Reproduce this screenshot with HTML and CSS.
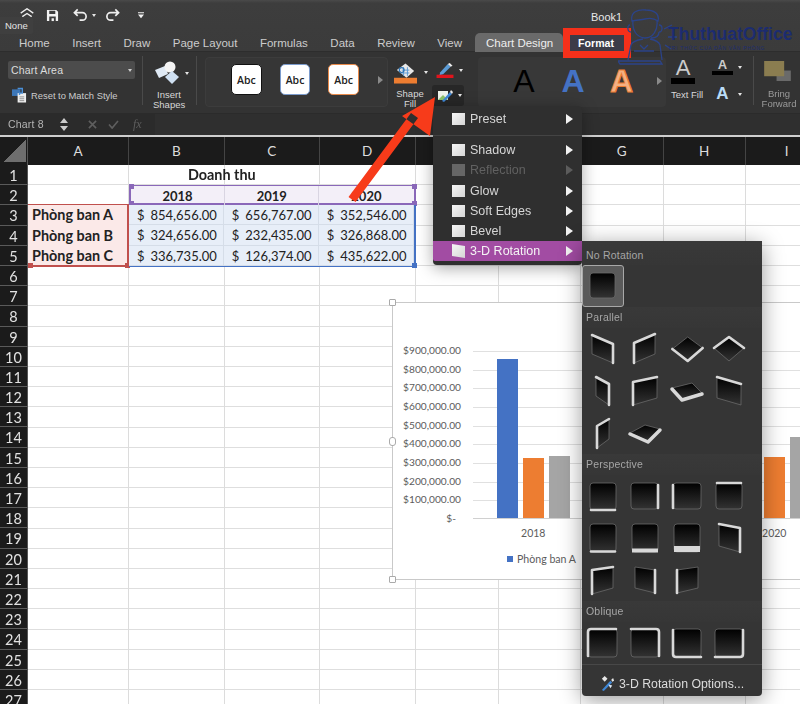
FILE: index.html
```html
<!DOCTYPE html>
<html lang="vi">
<head>
<meta charset="utf-8">
<title>Book1</title>
<link rel="stylesheet" href="styles.css">
</head>
<body>
<svg class="defs" aria-hidden="true"><defs><linearGradient id="fg" x1="0" y1="0" x2="0" y2="1"><stop offset="0" stop-color="#000"/><stop offset="1" stop-color="#333"/></linearGradient></defs></svg>
<div class="app">
  <header class="titlebar">
    <div class="quick">
      <svg class="q-home" viewBox="0 0 20 14"><path d="M2 6.500 10 1l8 5.500M4 11l6-4 6 4" /></svg>
      <svg class="q-save" viewBox="0 0 14 14"><path class="solid" d="M1 1h10l2 2v10H1zM3.500 1.800v3.700h6.500V1.800zM3.500 8v5h7V8z"/><rect class="solid" x="6" y="10" width="2.500" height="3"/></svg>
      <svg class="q-undo" viewBox="0 0 16 14"><path d="M5 1 1.500 4.500 5 8M2 4.500h8a4 4 0 0 1 0 8H7"/></svg>
      <span class="caret small"></span>
      <svg class="q-redo" viewBox="0 0 16 14"><path d="M11 1l3.500 3.500L11 8M14 4.500H6a4 4 0 0 0 0 8h3"/></svg>
      <svg class="q-more" viewBox="0 0 8 9"><path class="solid" d="M0 0h8v1.500H0zM0 3h8L4 8z"/></svg>
    </div>
    <div class="doc-title">Book1</div>
    <nav class="tabs">
      <span class="tab">Home</span><span class="tab">Insert</span><span class="tab">Draw</span><span class="tab">Page Layout</span><span class="tab">Formulas</span><span class="tab">Data</span><span class="tab">Review</span><span class="tab">View</span>
      <span class="tab tab-design">Chart Design</span>
      <span class="tab tab-format"><i class="red-box"></i><b>Format</b></span>
    </nav>
  </header>

  <section class="ribbon">
    <div class="g-selection">
      <div class="combo"><span>Chart Area</span><i class="combo-arrows"></i></div>
      <div class="reset">
        <svg viewBox="0 0 16 16"><rect x="0" y="2" width="9" height="7" fill="#3d77b8"/><rect x="6" y="6" width="9" height="10" fill="#eee"/><path d="M6 1h5v5H8v2" fill="none" stroke="#4a90d9" stroke-width="1.500"/><path d="M8 10h5M8 12h5M8 14h5" stroke="#777" stroke-width=".8"/></svg>
        <span>Reset to Match Style</span>
      </div>
    </div>
    <i class="sep"></i>
    <div class="g-insert">
      <div class="ico-row">
        <svg class="shapes" viewBox="0 0 26 24"><path d="M1 9l10-4 3 8-9 4z" fill="#dfe9f4"/><circle cx="16" cy="6" r="5.500" fill="#f4f4f4"/><path d="M18 10l7 6-7 7-7-7z" fill="#cfe0f2"/></svg>
        <span class="caret"></span>
      </div>
      <div class="lbl">Insert<br>Shapes</div>
    </div>
    <i class="sep"></i>
    <div class="g-styles">
      <button class="abc abc-dark">Abc</button><button class="abc abc-blue">Abc</button><button class="abc abc-orange">Abc</button>
      <i class="more-arrow"></i>
    </div>
    <div class="g-fill">
      <div class="fill-col">
        <div class="ico-row">
          <svg class="bucket" viewBox="0 0 24 23"><path d="M3 9l9-7 9 8-8 7z" fill="#e8e8e8"/><path d="M8 9h8M7 12h9M10 6v9M14 6v9" stroke="#5b9bd5" stroke-width="1"/><circle cx="8" cy="9" r="2.500" fill="none" stroke="#2e75b6" stroke-width="1.300"/><rect y="17" width="24" height="6" fill="#ed7d31"/></svg>
          <span class="caret"></span>
        </div>
        <div class="lbl">Shape<br>Fill</div>
      </div>
      <div class="pen-col">
        <div class="ico-row pen-row">
          <svg class="pen" viewBox="0 0 18 17"><path d="M4 11 12 2l3 3-8 8-4 1z" fill="#5b9bd5"/><path d="M12 2l2-1 3 3-2 1z" fill="#eee"/><rect y="13.500" width="18" height="3.500" fill="#e0141c"/></svg>
          <span class="caret"></span>
        </div>
        <div class="ico-row effects">
          <svg class="fx-ico" viewBox="0 0 16 14"><path d="M1 2h10v9H1z" fill="#eef3ea"/><path d="M1 11 6 6l5 5z" fill="#8cc46a"/><path d="M5 12 13 3l2 2-8 8z" fill="#3f87d6"/><path d="M13 3l1-2 2 2-1 2z" fill="#e8e8e8"/></svg>
          <span class="caret"></span>
        </div>
      </div>
    </div>
    <div class="g-wordart">
      <span class="wa wa-black">A</span><span class="wa wa-blue">A</span><span class="wa wa-orange">A</span>
      <i class="more-arrow"></i>
    </div>
    <div class="g-text">
      <div class="textfill">
        <span class="tf-a">A</span><i class="tf-bar"></i>
        <span class="tf-lbl">Text Fill</span>
      </div>
      <div class="text-opts">
        <div class="ico-row"><div class="small-a"><span>A</span><i></i></div><span class="caret"></span></div>
        <div class="ico-row"><span class="blue-a">A</span><span class="caret"></span></div>
      </div>
    </div>
    <i class="sep"></i>
    <div class="g-bring">
      <svg viewBox="0 0 28 21"><rect x="13" y="10" width="15" height="11" fill="#6a6a6a"/><rect width="21" height="16" fill="#8b7d50"/></svg>
      <div class="lbl">Bring<br>Forward</div>
    </div>
  </section>

  <section class="formula">
    <span class="name">Chart 8</span>
    <svg class="spin" viewBox="0 0 8 13"><path d="M4 0l4 5H0zM4 13 0 8h8z"/></svg>
    <svg class="f-x" viewBox="0 0 10 10"><path d="M1 1l8 8M9 1l-8 8"/></svg>
    <svg class="f-check" viewBox="0 0 12 10"><path d="M1 5l3.500 4L11 1"/></svg>
    <i class="f-fx">fx</i>
    <div class="f-input"></div>
  </section>
  <div class="sheet-line"></div>

  <main class="sheet">
    <div class="corner"><i></i></div>
    <div class="col-heads">
      <span class="ca">A</span><span class="cb">B</span><span class="cb">C</span><span class="cb">D</span><span class="ce">E</span><span class="cf">F</span><span class="cf">G</span><span class="cf">H</span><span class="cf">I</span>
    </div>
    <div class="row-heads">
      <span>1</span><span>2</span><span>3</span><span>4</span><span>5</span><span>6</span><span>7</span><span>8</span><span>9</span><span>10</span><span>11</span><span>12</span><span>13</span><span>14</span><span>15</span><span>16</span><span>17</span><span>18</span><span>19</span><span>20</span><span>21</span><span>22</span><span>23</span><span>24</span><span>25</span><span>26</span><span>27</span>
    </div>
    <div class="cells">
      <div class="data">
        <div class="title">Doanh thu</div>
        <div class="range range-purple">
          <span>2018</span><span>2019</span><span>2020</span>
          <i class="h tl"></i><i class="h tr"></i><i class="h bl"></i><i class="h br"></i>
        </div>
        <div class="range-red">
          <span>Phòng ban A</span><span>Phòng ban B</span><span>Phòng ban C</span>
          <i class="h bl"></i><i class="h br"></i>
        </div>
        <div class="range range-blue">
          <p><span>$</span><span>854,656.00</span></p><p><span>$</span><span>656,767.00</span></p><p><span>$</span><span>352,546.00</span></p>
          <p><span>$</span><span>324,656.00</span></p><p><span>$</span><span>232,435.00</span></p><p><span>$</span><span>326,868.00</span></p>
          <p><span>$</span><span>336,735.00</span></p><p><span>$</span><span>126,374.00</span></p><p><span>$</span><span>435,622.00</span></p>
          <i class="h br"></i>
        </div>
      </div>

      <figure class="chart">
        <i class="hd hd-t"></i><i class="hd hd-m"></i><i class="hd hd-b"></i>
        <div class="plot-wrap">
          <div class="axis"><span>$900,000.00</span><span>$800,000.00</span><span>$700,000.00</span><span>$600,000.00</span><span>$500,000.00</span><span>$400,000.00</span><span>$300,000.00</span><span>$200,000.00</span><span>$100,000.00</span><span class="zero">$-</span></div>
          <div class="plot-col">
            <div class="plot">
              <div class="grp"><i class="bar b1" style="height:94.96%"></i><i class="bar b2" style="height:36.07%"></i><i class="bar b3" style="height:37.41%"></i></div>
              <div class="grp"><i class="bar b1" style="height:72.97%"></i><i class="bar b2" style="height:25.83%"></i><i class="bar b3" style="height:14.04%"></i></div>
              <div class="grp"><i class="bar b1" style="height:39.17%"></i><i class="bar b2" style="height:36.32%"></i><i class="bar b3" style="height:48.40%"></i></div>
            </div>
            <div class="cats"><span>2018</span><span>2019</span><span>2020</span></div>
            <div class="legend"><i></i>Phòng ban A</div>
          </div>
        </div>
      </figure>
    </div>
  </main>
</div>

<div class="watermark">
  <svg class="wm-person" viewBox="0 0 64 58"><path d="M14 14c-2-9 6-12 14-11 7 0 14 3 12 11-4-3-9-3-13-2-4 1-9 1-13 2zM15 14c-1 9 3 16 12 17 8 0 13-8 12-17M12 18c-3 0-3 7 1 7M41 18c4 0 4 7 0 7M41 25c0 4-3 6-8 6M10 53l3-15c1-3 6-5 12-6M44 53l-2-15c-1-3-5-5-10-6M0 54h42l2 3H2zM16 44h20M22 38l4 4 4-4M46 22l8-4M50 30h9M47 38l6 4"/></svg>
  <div class="wm-text"><strong>ThuthuatOffice</strong><small>TRI THỨC CỦA DÂN VĂN PHÒNG</small></div>
</div>

<div class="tooltip">None</div>

<div class="menu">
  <div class="mi"><i class="chk"></i><span>Preset</span><i class="tri"></i></div>
  <hr>
  <div class="mi"><i class="chk"></i><span>Shadow</span><i class="tri"></i></div>
  <div class="mi off"><i class="chk"></i><span>Reflection</span><i class="tri"></i></div>
  <div class="mi"><i class="chk"></i><span>Glow</span><i class="tri"></i></div>
  <div class="mi"><i class="chk"></i><span>Soft Edges</span><i class="tri"></i></div>
  <div class="mi"><i class="chk"></i><span>Bevel</span><i class="tri"></i></div>
  <div class="mi active"><i class="chk skew"></i><span>3-D Rotation</span><i class="tri"></i></div>
</div>

<div class="sub">
  <h4 class="h-first">No Rotation</h4>
  <div class="tiles">
    <div class="tile sel"><svg viewBox="0 0 42 42"><rect class="f" x="8" y="8" width="25" height="25" rx="3"/></svg></div>
  </div>
  <h4>Parallel</h4>
  <div class="tiles">
    <div class="tile"><svg viewBox="0 0 42 42"><path class="f" d="M10 7 31 16V35L10 26Z"/><path class="e" d="M10 7 31 16V35"/></svg></div>
    <div class="tile"><svg viewBox="0 0 42 42"><path class="f" d="M10 15 31 6V26L10 35Z"/><path class="e" d="M10 35V15L31 6"/></svg></div>
    <div class="tile"><svg viewBox="0 0 42 42"><path class="f" d="M21.700 9 36.700 20 21.700 33 6.300 21Z"/><path class="e" d="M6.300 21 21.700 33 36.700 20"/></svg></div>
    <div class="tile"><svg viewBox="0 0 42 42"><path class="f" d="M21 9 36 20 21 33 6 20Z"/><path class="e" d="M6 20 21 9 36 20"/></svg></div>
    <div class="tile"><svg viewBox="0 0 42 42"><path class="f" d="M14 7 27 14V35L14 26Z"/><path class="e" d="M14 7 27 14V35"/></svg></div>
    <div class="tile"><svg viewBox="0 0 42 42"><path class="f" d="M9 12 33 7V28L9 35Z"/><path class="e" d="M9 35V12L33 7"/></svg></div>
    <div class="tile"><svg viewBox="0 0 42 42"><path class="f" d="M6 18 26 13 36 23 16 29Z"/><path class="e w3" d="M6 19 16 30 36 24"/></svg></div>
    <div class="tile"><svg viewBox="0 0 42 42"><path class="f" d="M9 7 33 14V35L9 28Z"/><path class="e" d="M9 7 33 14"/></svg></div>
    <div class="tile"><svg viewBox="0 0 42 42"><path class="f" d="M15 14 27 7V27L15 36Z"/><path class="e" d="M15 36V14L27 7"/></svg></div>
    <div class="tile"><svg viewBox="0 0 42 42"><path class="f" d="M6 21 21 13 36 17 24 29Z"/><path class="e w3" d="M6 22 24 30 36 18"/></svg></div>
  </div>
  <h4>Perspective</h4>
  <div class="tiles">
    <div class="tile"><svg viewBox="0 0 42 42"><rect class="f" x="8" y="8" width="26" height="27" rx="3"/><path class="e" d="M9 35H33"/></svg></div>
    <div class="tile"><svg viewBox="0 0 42 42"><rect class="f" x="7" y="8" width="27" height="26" rx="3"/><path class="e" d="M34 10V33"/></svg></div>
    <div class="tile"><svg viewBox="0 0 42 42"><rect class="f" x="7" y="8" width="28" height="26" rx="3"/><path class="e" d="M7 10V33"/></svg></div>
    <div class="tile"><svg viewBox="0 0 42 42"><rect class="f" x="8" y="8" width="26" height="26" rx="3"/><path class="e" d="M9 8H33"/></svg></div>
    <div class="tile"><svg viewBox="0 0 42 42"><rect class="f" x="8" y="7" width="26" height="28" rx="3"/><path class="e" d="M9 34.500H33"/></svg></div>
    <div class="tile"><svg viewBox="0 0 42 42"><rect class="f" x="8" y="7" width="26" height="28" rx="3"/><path class="e w4" d="M8 33.500H34"/></svg></div>
    <div class="tile"><svg viewBox="0 0 42 42"><rect class="f" x="8" y="7" width="26" height="28" rx="3"/><path class="e w6" d="M8 32H34"/></svg></div>
    <div class="tile"><svg viewBox="0 0 42 42"><path class="f" d="M11 7 32 11V35L11 29Z"/><path class="e" d="M11 7 32 11V35"/></svg></div>
    <div class="tile"><svg viewBox="0 0 42 42"><path class="f" d="M10 11 31 8V29L10 35Z"/><path class="e" d="M10 35V11L31 8"/></svg></div>
    <div class="tile"><svg viewBox="0 0 42 42"><path class="f" d="M11 8 31 11V34L11 29Z"/><path class="e" d="M31 11V34"/></svg></div>
    <div class="tile"><svg viewBox="0 0 42 42"><path class="f" d="M11 11 32 8V29L11 34Z"/><path class="e" d="M11 34V11"/></svg></div>
  </div>
  <h4>Oblique</h4>
  <div class="tiles">
    <div class="tile"><svg viewBox="0 0 42 42"><rect class="f" x="6" y="7" width="29" height="28" rx="3"/><path class="e" d="M6 34V10Q6 7 9 7H34"/></svg></div>
    <div class="tile"><svg viewBox="0 0 42 42"><rect class="f" x="7" y="7" width="28" height="28" rx="3"/><path class="e" d="M7 7H32Q35 7 35 10V34"/></svg></div>
    <div class="tile"><svg viewBox="0 0 42 42"><rect class="f" x="7" y="7" width="28" height="28" rx="3"/><path class="e" d="M7 8V32Q7 35 10 35H35"/></svg></div>
    <div class="tile"><svg viewBox="0 0 42 42"><rect class="f" x="7" y="7" width="28" height="28" rx="3"/><path class="e" d="M7 35H32Q35 35 35 32V8"/></svg></div>
  </div>
  <div class="options">
    <svg viewBox="0 0 16 16"><path d="M2 3l3-3 3 3-3 3z" fill="#e8e8e8"/><path d="M2 15l9-10 2 2-9 9z" fill="#3f87d6"/><path d="M12 4l2-2 1 3-2 1z" fill="#e8e8e8"/><path d="M9 9l4 1-2 3z" fill="#dfe9f4"/></svg>
    <span>3-D Rotation Options...</span>
  </div>
</div>

<svg class="arrow" viewBox="0 0 800 704"><path d="M348.500 197 411 113l7 5-62.500 84ZM435 97 402 116 430 136Z"/></svg>
</body>
</html>
```

FILE: styles.css
```css
* { box-sizing: border-box; }
html, body { margin: 0; padding: 0; }
body { width: 800px; height: 704px; overflow: hidden; position: relative; background: #fff; font-family: "Liberation Sans", Arial, sans-serif; color: #ddd; filter: blur(.4px); }
.defs { position: absolute; width: 0; height: 0; }
.app { display: flex; flex-direction: column; height: 704px; }
svg { display: block; }

/* title bar */
.titlebar { height: 52px; flex: none; position: relative; z-index: 2; background: linear-gradient(#4a4a4a 0, #3d3d3d 3px, #3b3b3b 100%); border-bottom: 1px solid #2d2d2d; }
.quick { display: flex; align-items: center; height: 30px; padding-left: 19px; }
.quick svg path { fill: none; stroke: #eee; stroke-width: 1.800; }
.quick svg path.solid, .quick svg rect.solid { fill: #f2f2f2; fill-rule: evenodd; stroke: none; }
.q-home { width: 16px; height: 11px; margin-top: -4px; }
.q-save { width: 13px; height: 13px; margin-left: 11px; }
.q-undo { width: 15px; height: 14px; margin-left: 14px; }
.q-redo { width: 15px; height: 14px; margin-left: 9px; }
.q-more { width: 6px; height: 7px; margin-left: 18px; }
.caret { width: 0; height: 0; border: 2.500px solid transparent; border-top: 3px solid #e6e6e6; border-bottom: 0; display: block; flex: none; }
.caret.small { margin-left: 4px; }
.doc-title { position: absolute; left: 591px; top: 11px; font-size: 11px; color: #e8e8e8; }
.tabs { display: flex; align-items: stretch; position: absolute; left: 19px; top: 33px; height: 19px; gap: 22.500px; font-size: 11.500px; color: #ccc; }
.tab { display: flex; align-items: center; height: 19px; white-space: nowrap; }
.tab-design { background: #6a6a6a; color: #eee; border-radius: 5px 5px 0 0; padding: 0 11px; width: 88px; margin-left: -9.500px; }
.tab-format { position: relative; margin-left: -7.500px; color: #fff; font-size: 10.600px; }
.tab-format b { position: relative; }
.red-box { position: absolute; left: -15px; top: -5px; width: 68px; height: 30px; border: 7px solid #f5301a; background: #3c3c48; }

/* ribbon */
.ribbon { height: 61px; flex: none; display: flex; background: #333; }
.sep { width: 1px; background: #4a4a4a; margin: 4px 0 8px; flex: none; }
.lbl { font-size: 9.500px; line-height: 10px; text-align: center; color: #d8d8d8; }
.ico-row { display: flex; align-items: center; gap: 5px; }
.g-selection { width: 142px; flex: none; padding: 9px 0 0 8px; }
.combo { width: 127px; height: 18px; background: #4c4c4c; border-radius: 2px; display: flex; align-items: center; justify-content: space-between; padding: 0 3px; font-size: 10.500px; color: #ddd; letter-spacing: .2px; }
.combo-arrows { width: 0; height: 0; border: 2px solid transparent; border-top: 3px solid #ccc; border-bottom: 0; }
.reset { display: flex; align-items: center; gap: 4px; margin-top: 8px; padding-left: 4px; font-size: 9.400px; color: #ccc; white-space: nowrap; }
.reset svg { width: 15px; height: 16px; flex: none; }
.g-insert { width: 53px; flex: none; padding: 9px 0 0 11px; }
.shapes { width: 26px; height: 24px; }
.g-insert .lbl { width: 32px; margin-top: 5px; margin-left: -1px; }
.g-styles { width: 183px; margin: 5px 0 6px 8px; flex: none; display: flex; align-items: center; gap: 18px; padding: 0 4px 5px 25px; border: 1px solid #3c3c3c; border-radius: 4px; background: #363636; }
.abc { width: 31px; height: 31px; padding: 0; border-radius: 5px; background: #fff; color: #222; font: 600 10.500px "Open Sans", sans-serif; border: 1px solid #111; }
.abc-blue { border-color: #7b9bcc; }
.abc-orange { border-color: #e98a4a; }
.more-arrow { width: 0; height: 0; border: 4px solid transparent; border-left: 5px solid #8a8a8a; border-right: 0; margin-left: 1px; }
.g-fill { width: 90px; flex: none; display: flex; padding-left: 6px; gap: 4px; }
.fill-col { padding-top: 9px; width: 34px; }
.bucket { width: 24px; height: 23px; }
.fill-col .lbl { margin-top: 5px; width: 32px; }
.fill-col .caret { margin-left: 2px; }
.pen-col { width: 34px; padding-top: 10px; }
.pen { width: 18px; height: 16px; }
.pen-row { padding-left: 4px; }
.effects { width: 32px; height: 21px; margin-top: 7px; background: #272727; border-radius: 3px; padding-left: 5px; }
.fx-ico { width: 16px; height: 14px; }
.g-wordart { width: 188px; flex: none; display: flex; align-items: center; margin: 5px 0 6px; padding: 0 0 2px 35px; gap: 26.500px; background: #383838; border-radius: 4px; }
.wa { font-size: 32px; font-weight: 700; width: 22px; text-align: center; line-height: 1; }
.wa-black { color: #000; font-weight: 400; }
.wa-blue { color: #4472c4; }
.wa-orange { color: #f4b183; -webkit-text-stroke: 1px #ed7d31; }
.g-wordart .more-arrow { margin-left: -2px; }
.g-text { width: 87px; flex: none; display: flex; }
.textfill { width: 46px; padding: 6px 0 0 5px; display: flex; flex-direction: column; align-items: flex-start; }
.tf-a { font-size: 22px; line-height: 20px; width: 24px; text-align: center; color: #ccc; font-weight: 400; }
.tf-bar { width: 24px; height: 6px; background: #000; }
.tf-lbl { font-size: 9.500px; margin-top: 5px; color: #d8d8d8; white-space: nowrap; }
.text-opts { padding-top: 7px; display: flex; flex-direction: column; gap: 11px; }
.small-a { width: 21px; text-align: center; font-size: 13px; line-height: 12px; color: #ccc; font-weight: 700; }
.small-a i { display: block; height: 4px; background: #000; }
.blue-a { width: 21px; text-align: center; font-size: 17px; font-weight: 700; line-height: 16px; color: #b9dcf7; }
.g-bring { flex: 1; padding: 9px 0 0 10px; }
.g-bring svg { width: 27px; height: 20px; }
.g-bring .lbl { color: #9a9a9a; margin: 8px 0 0 -5px; width: 40px; }

/* formula bar */
.formula { height: 22px; flex: none; display: flex; align-items: center; background: #2b2b2b; padding-left: 8px; }
.name { width: 52px; font-size: 10.500px; color: #b5b5b5; letter-spacing: .2px; line-height: 24px; }
.spin { width: 8px; height: 13px; fill: #ccc; margin-left: 0; }
.f-x { width: 9px; height: 9px; margin-left: 20px; }
.f-check { width: 11px; height: 9px; margin-left: 11px; }
.f-x path, .f-check path { fill: none; stroke: #5e5e5e; stroke-width: 1.800; }
.f-fx { margin-left: 14px; font: italic 12px "Liberation Serif", serif; color: #5e5e5e; width: 14px; }
.f-input { flex: 1; height: 21px; margin-left: 8px; background: #2f2f2f; }
.sheet-line { height: 2px; flex: none; background: #cfcfcf; }

/* sheet */
.sheet { flex: 1; min-height: 0; display: grid; grid-template-columns: 28px 1fr; grid-template-rows: 28px 539px; overflow: hidden; background: #fff; }
.corner { background: #1b1b1b; padding: 2px 0 0 3px; border-right: 1px solid #555; }
.corner i { display: block; width: 23px; height: 23px; background: linear-gradient(135deg, transparent 50%, #6e6e6e 50%); }
.col-heads { display: flex; background: #1b1b1b; color: #ddd; font: 400 13.500px/30px Lato, sans-serif; }
.col-heads span { display: flex; align-items: center; justify-content: center; border-right: 1px solid #444; flex: none; }
.ca { width: 101px; } .cb { width: 95.500px; } .ce { width: 83px; } .cf { width: 82.500px; }
.row-heads { display: flex; flex-direction: column; background: #1b1b1b; font: 400 14.500px Lato, sans-serif; color: #e2e2e2; border-right: 1px solid #555; overflow: hidden; }
.row-heads span { flex: 0 0 20.200px; height: 20.200px; min-height: 0; line-height: 21px; text-align: center; border-bottom: 1px solid #5a5a5a; }
.cells { position: relative; overflow: hidden; font: 400 13px Lato, sans-serif; color: #222;
  background:
    linear-gradient(#dcdcdc,#dcdcdc) 100px 0/1px 100% no-repeat,
    linear-gradient(#dcdcdc,#dcdcdc) 196px 0/1px 100% no-repeat,
    linear-gradient(#dcdcdc,#dcdcdc) 291px 0/1px 100% no-repeat,
    linear-gradient(#dcdcdc,#dcdcdc) 387px 0/1px 100% no-repeat,
    linear-gradient(#dcdcdc,#dcdcdc) 470px 0/1px 100% no-repeat,
    linear-gradient(#dcdcdc,#dcdcdc) 552px 0/1px 100% no-repeat,
    linear-gradient(#dcdcdc,#dcdcdc) 635px 0/1px 100% no-repeat,
    linear-gradient(#dcdcdc,#dcdcdc) 717px 0/1px 100% no-repeat,
    repeating-linear-gradient(#fff 0 19.200px, #dedede 19.200px 20.200px);
}
.data { display: grid; grid-template-columns: 101px 286.500px; grid-template-rows: 20.200px 20.200px 61.600px; }
.title { grid-column: 1 / 3; text-align: center; font-weight: 700; font-size: 14.400px; line-height: 20px; }
.range { display: grid; grid-template-columns: repeat(3, 1fr); position: relative; }
.range-purple { grid-column: 2; grid-row: 2; background: #f3eff8; border: 2px solid #8a68b9; border-width: 1px 2px 2px; font-weight: 700; }
.range-purple span { text-align: center; line-height: 20px; border-right: 1px solid #d9d5e2; }
.range-purple span:last-of-type { border-right: 0; }
.range-red { grid-column: 1; grid-row: 3; position: relative; background: #fbe9e8; border: solid #c0504d; border-width: 1px 2px 2px 0; margin-top: -1px; display: flex; flex-direction: column; font-weight: 700; font-size: 14.400px; padding-left: 4px; }
.range-red span { flex: 0 0 20.200px; min-height: 0; line-height: 20px; }
.range-blue { grid-column: 2; grid-row: 3; background: #e7eef8; border: solid #4472c4; border-width: 0 2px 2px 0; }
.range-blue p { margin: 0; display: flex; justify-content: space-between; padding: 0 6px 0 8px; height: 20.100px; line-height: 20px; border-right: 1px solid #d5dde8; border-bottom: 1px solid #d5dde8; }
.h { position: absolute; width: 5px; height: 5px; background: #8a68b9; }
.range-red .h { background: #c0504d; }
.range-blue .h { background: #4472c4; }
.tl { left: -2px; top: -2px; } .tr { right: -3px; top: -2px; } .bl { left: -2px; bottom: -3px; } .br { right: -3px; bottom: -3px; }
.range-red .bl { left: 0; }

/* chart */
.chart { position: absolute; left: 364px; top: 137px; width: 440px; height: 278px; margin: 0; background: #fff; border: 1.500px solid #c9c9c9; color: #5c5c5c; font: 400 10.200px Lato, sans-serif; }
.hd { position: absolute; left: -4px; width: 7px; height: 7px; background: #fff; border: 1px solid #aaa; border-radius: 1px; }
.hd-t { top: -4px; } .hd-m { top: 134px; height: 9px; border-radius: 3px; } .hd-b { bottom: -4px; }
.plot-wrap { display: flex; padding-top: 38px; }
.axis { width: 68px; display: flex; flex-direction: column; flex: none; text-align: right; }
.axis span { height: 18.660px; line-height: 18.660px; }
.axis .zero { padding-right: 5px; }
.plot-col { padding-left: 12px; margin-top: 10px; }
.plot { display: flex; width: 361.500px; height: 168px; background: repeating-linear-gradient(#e0e0e0 0 1px, transparent 1px 18.667px); border-bottom: 1px solid #d0d0d0; }
.grp { width: 120.500px; display: flex; gap: 5px; justify-content: center; align-items: flex-end; height: 100%; }
.bar { width: 21px; display: block; }
.b1 { background: #4472c4; } .b2 { background: #ed7d31; } .b3 { background: #a5a5a5; }
.cats { display: flex; margin-top: 7px; font-size: 10.500px; }
.cats span { width: 120.500px; text-align: center; line-height: 14px; }
.legend { margin: 12px 0 0 34px; display: flex; align-items: center; gap: 4px; line-height: 14px; font-size: 10.600px; }
.legend i { width: 6px; height: 6px; background: #4472c4; }

/* watermark */
.watermark { position: absolute; left: 618px; top: 7px; display: flex; z-index: 3; pointer-events: none; }
.wm-person { width: 64px; height: 58px; fill: none; stroke: #2b4389; stroke-width: 1.300; }
.wm-text { margin: 19px 0 0 -14px; color: #1c2c70; line-height: 1; }
.wm-text strong { display: block; font-size: 17.500px; font-weight: 700; white-space: nowrap; }
.wm-text small { display: block; font-size: 5px; letter-spacing: .7px; margin-top: 2px; white-space: nowrap; }

/* tooltip */
.tooltip { position: absolute; left: 0; top: 17px; width: 33px; height: 17px; background: #3f3f3f; border-radius: 0 2px 2px 0; font-size: 9.500px; color: #e4e4e4; line-height: 17px; padding-left: 5px; z-index: 3; }

/* menus */
.menu { position: absolute; left: 433px; top: 106px; width: 149px; height: 159px; background: #2f2f2f; border-radius: 4px; padding-top: 3px; box-shadow: 0 3px 16px rgba(0,0,0,.35); z-index: 4; font-size: 12.500px; color: #d6d6d6; }
.menu hr { margin: 6px 0 4px; border: 0; border-top: 1px solid #444; }
.mi { height: 20.200px; display: flex; align-items: center; padding: 0 9px 0 19px; }
.mi span { flex: 1; margin-left: 5px; }
.chk { width: 13px; height: 12px; background: linear-gradient(135deg, #f6f6f6, #d5d5d5); flex: none; }
.tri { width: 0; height: 0; border: 5px solid transparent; border-left: 7px solid #f2f2f2; border-right: 0; flex: none; }
.off { color: #616161; }
.off .chk { background: #666; }
.off .tri { border-left-color: #5c5c5c; }
.active { background: #a24ca3; color: #f4f4f4; border-radius: 0 0 0 2px; }
.skew { transform: skewY(8deg); }
.sub { position: absolute; left: 582px; top: 241px; width: 180px; height: 455px; background: #353535; border-radius: 0 4px 4px 4px; box-shadow: 0 4px 22px rgba(0,0,0,.4); z-index: 4; }
.sub h4 { margin: 0; height: 21px; padding-left: 4px; font-size: 10.500px; font-weight: 400; line-height: 20px; color: #a6a6a6; background: linear-gradient(#393939, #363636); letter-spacing: .2px; }
.sub .h-first { height: 24px; line-height: 28px; }
.tiles { display: grid; grid-template-columns: repeat(4, 42px); grid-auto-rows: 42px; }
.tile { width: 42px; height: 42px; }
.tile svg { width: 42px; height: 42px; }
.sel { background: #5a5a5a; border: 1px solid #a8a8a8; border-radius: 3px; }
.sel svg { margin: -1px; }
.f { fill: url(#fg); stroke: #6a6a6a; stroke-width: .8; stroke-linejoin: round; }
.e { fill: none; stroke: #d8d8d8; stroke-width: 2.600; stroke-linecap: round; stroke-linejoin: round; }
.w3 { stroke-width: 3.500; }
.w4 { stroke-width: 4; stroke-linecap: butt; }
.w6 { stroke-width: 6; stroke-linecap: butt; }
.options { height: 33px; border-top: 1px solid #484848; display: flex; align-items: center; padding: 5px 0 0 18px; gap: 4px; font-size: 12.300px; color: #dcdcdc; }
.options svg { width: 15px; height: 15px; flex: none; }
.arrow { position: absolute; left: 0; top: 0; width: 800px; height: 704px; z-index: 5; fill: #f73b1a; pointer-events: none; }
```
